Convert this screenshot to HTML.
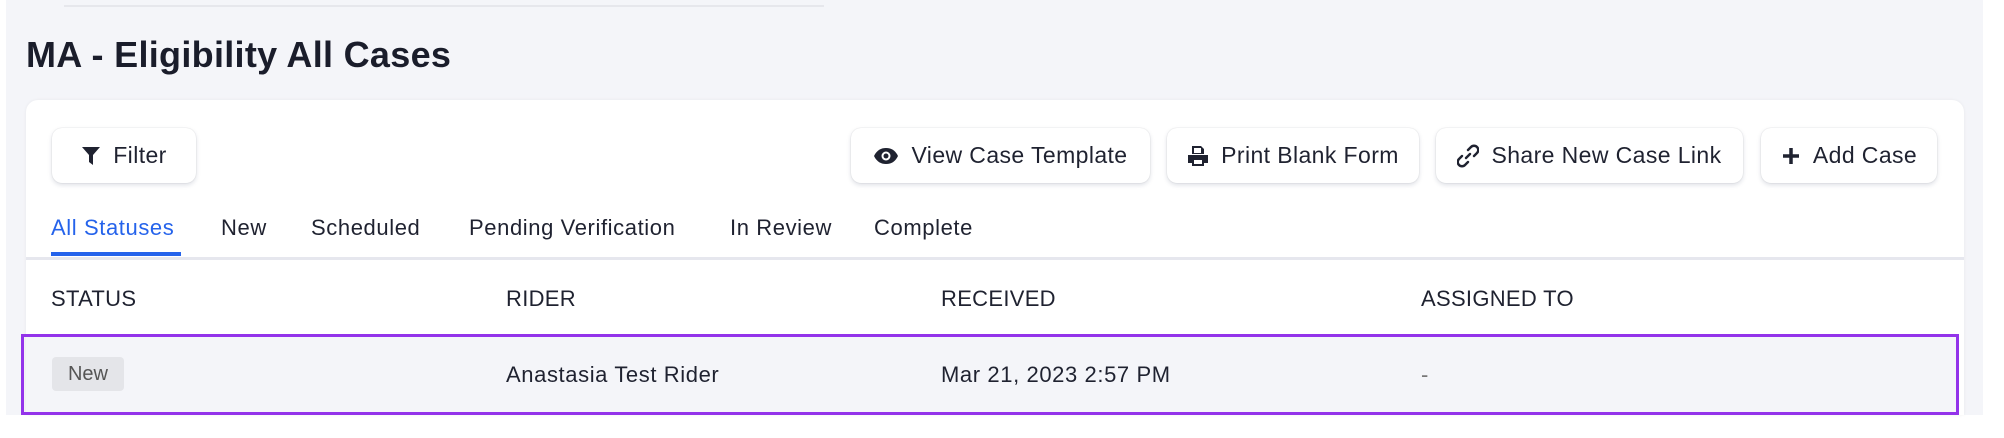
<!DOCTYPE html>
<html><head><style>
*{margin:0;padding:0;box-sizing:border-box}
body{width:2004px;height:438px;background:#fff;font-family:"Liberation Sans",sans-serif;color:#1c1f2e;position:relative;overflow:hidden}
.bg{position:absolute;left:6px;top:0;width:1977px;height:415px;background:#f4f5f9}
.topline{position:absolute;left:64px;top:5px;width:760px;height:2px;background:#e6e7ec}
h1{position:absolute;left:26px;top:34px;font-size:36px;font-weight:bold;color:#1a1d2b;letter-spacing:0.3px}
.card{position:absolute;left:26px;top:100px;width:1938px;height:315px;background:#fff;border-radius:12px 12px 0 0;box-shadow:0 0 3px rgba(0,0,0,.06)}
.btn{position:absolute;top:128px;height:55px;background:#fff;border-radius:10px;box-shadow:0 2px 5px rgba(30,40,80,.15),0 0 1px rgba(0,0,0,.2);font-size:23px;letter-spacing:0.4px;display:flex;align-items:center;justify-content:center;gap:12px;color:#1f2230}
.btn svg{flex:none}
.tab{position:absolute;top:215px;font-size:22px;letter-spacing:0.6px;color:#1f2230}
.ul{position:absolute;left:51px;top:252px;width:130px;height:4px;background:#2563eb}
.tline{position:absolute;left:26px;top:257px;width:1938px;height:3px;background:#e6e7ee}
.th{position:absolute;top:286px;font-size:22px;letter-spacing:0.3px;color:#1f2230}
.row{position:absolute;left:26px;top:335px;width:1932px;height:78px;background:#f4f5f9}
.box{position:absolute;left:21px;top:334px;width:1938px;height:81px;border:3px solid #9333ea}
.td{position:absolute;top:362px;font-size:22px;letter-spacing:0.6px;color:#1f2230}
.badge{position:absolute;left:52px;top:357px;width:72px;height:34px;background:#e4e5e9;border-radius:4px;font-size:20px;color:#555;display:flex;align-items:center;justify-content:center}
</style></head><body>
<div class="bg"></div>
<div class="topline"></div>
<h1>MA - Eligibility All Cases</h1>
<div class="card"></div>
<div class="btn" style="left:52px;width:144px"><svg width="20" height="22" viewBox="0 0 20 22"><path d="M1 2h18l-7 8v10l-4-3V10z" fill="#1f2230"/></svg>Filter</div>
<div class="btn" style="left:851px;width:299px"><svg width="26" height="18" viewBox="0 0 26 18"><path d="M1 9C4 3 8 1 13 1s9 2 12 8c-3 6-7 8-12 8S4 15 1 9z" fill="#1f2230"/><circle cx="13" cy="9" r="4.5" fill="#fff"/><circle cx="13" cy="9" r="2.5" fill="#1f2230"/></svg>View Case Template</div>
<div class="btn" style="left:1167px;width:252px"><svg width="22" height="22" viewBox="0 0 22 22"><path d="M5 1h9l3 3v5H5z M1 10h20v8h-4v3H5v-3H1z" fill="#1f2230"/><rect x="7" y="15" width="8" height="4" fill="#fff"/><rect x="7" y="3" width="7" height="5" fill="#fff"/></svg>Print Blank Form</div>
<div class="btn" style="left:1436px;width:307px"><svg width="22" height="24" viewBox="0 0 22 24"><path d="M9 14l4-4M11 6l3-3a4 4 0 016 6l-3 3M11 18l-3 3a4 4 0 01-6-6l3-3" stroke="#1f2230" stroke-width="2.4" fill="none" stroke-linecap="round"/></svg>Share New Case Link</div>
<div class="btn" style="left:1761px;width:176px"><svg width="20" height="20" viewBox="0 0 20 20"><path d="M10 2v16M2 10h16" stroke="#1f2230" stroke-width="3.5"/></svg>Add Case</div>
<div class="tab" style="left:51px;color:#2563eb">All Statuses</div>
<div class="tab" style="left:221px">New</div>
<div class="tab" style="left:311px">Scheduled</div>
<div class="tab" style="left:469px">Pending Verification</div>
<div class="tab" style="left:730px">In Review</div>
<div class="tab" style="left:874px">Complete</div>
<div class="ul"></div>
<div class="tline"></div>
<div class="th" style="left:51px">STATUS</div>
<div class="th" style="left:506px">RIDER</div>
<div class="th" style="left:941px">RECEIVED</div>
<div class="th" style="left:1421px">ASSIGNED TO</div>
<div class="row"></div>
<div class="badge">New</div>
<div class="td" style="left:506px">Anastasia Test Rider</div>
<div class="td" style="left:941px">Mar 21, 2023 2:57 PM</div>
<div class="td" style="left:1421px;color:#777">-</div>
<div class="box"></div>
</body></html>
